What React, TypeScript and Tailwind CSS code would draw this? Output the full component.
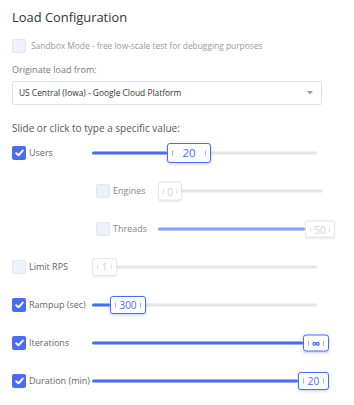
import React from "react";

const BLUE = "#4a6cf5";

function Check({ checked }: { checked: boolean }) {
  if (checked) {
    return (
      <div className="w-[14px] h-[14px] rounded-[2px] bg-[#4a6cf5] flex items-center justify-center shrink-0">
        <svg width="9" height="8" viewBox="0 0 9 8">
          <path d="M1.2 4.2 L3.5 6.3 L7.8 1.6" stroke="white" strokeWidth="2" fill="none" strokeLinecap="round" strokeLinejoin="round" />
        </svg>
      </div>
    );
  }
  return <div className="w-[14px] h-[14px] rounded-[2px] bg-[#edf2fa] border border-[#e1e7f0] shrink-0" />;
}

function Handle({ text, active, w, h, big }: { text: React.ReactNode; active: boolean; w: number; h: number; big?: boolean }) {
  return (
    <div
      className={
        "absolute top-1/2 -translate-y-1/2 bg-white rounded-[3px] flex items-center justify-center " +
        (active
          ? "border border-[#4a6cf5] text-[#4a6cf5] shadow-[0_1px_3px_rgba(74,108,245,0.35)]"
          : "border border-[#e6e6e6] text-[#cfcfcf] shadow-[0_1px_2px_rgba(0,0,0,0.08)]")
      }
      style={{ width: w, height: h }}
    >
      <span className={"absolute left-[4px] top-1/2 -translate-y-1/2 w-px h-[5px] " + (active ? "bg-[#9fb2f8]" : "bg-[#e2e2e2]")} />
      <span className={(big ? "text-[11.5px]" : "text-[10px]") + " leading-none"}>{text}</span>
      <span className={"absolute right-[4px] top-1/2 -translate-y-1/2 w-px h-[5px] " + (active ? "bg-[#9fb2f8]" : "bg-[#e2e2e2]")} />
    </div>
  );
}

function Slider({
  width,
  pos,
  hw,
  hh,
  text,
  active,
  fill,
  big,
}: {
  width: number;
  pos: number;
  hw: number;
  hh: number;
  text: React.ReactNode;
  active: boolean;
  fill?: string;
  big?: boolean;
}) {
  return (
    <div className="relative h-full" style={{ width }}>
      <div className="absolute left-0 right-0 top-1/2 -translate-y-1/2 h-[3px] bg-[#e5e5e5] rounded-full" />
      {fill && (
        <div className="absolute left-0 top-1/2 -translate-y-1/2 h-[3px] rounded-full" style={{ width: pos, background: fill }} />
      )}
      <div className="absolute top-0 bottom-0" style={{ left: pos }}>
        <Handle text={text} active={active} w={hw} h={hh} big={big} />
      </div>
    </div>
  );
}

function MainRow({
  checked,
  label,
  children,
}: {
  checked: boolean;
  label: string;
  children: React.ReactNode;
}) {
  return (
    <div className="flex items-center h-[38px]">
      <div className="w-[80px] flex items-center gap-[3px]">
        <Check checked={checked} />
        <span className="text-[9px] text-[#666] whitespace-nowrap">{label}</span>
      </div>
      {children}
    </div>
  );
}

function SubRow({ label, children }: { label: string; children: React.ReactNode }) {
  return (
    <div className="flex items-center h-[38px] pl-[84px]">
      <div className="w-[62px] flex items-center gap-[3px]">
        <Check checked={false} />
        <span className="text-[9px] text-[#888] whitespace-nowrap">{label}</span>
      </div>
      {children}
    </div>
  );
}

export default function App() {
  return (
    <div className="w-[354px] h-[405px] bg-white pl-3 pt-[6px] font-['Open_Sans',sans-serif] overflow-hidden">
      <div className="text-[12.9px] text-[#333] leading-[22px] h-[24px]">Load Configuration</div>
      <div className="flex items-center gap-[5px] h-[26px] mt-[3px]">
        <Check checked={false} />
        <span className="text-[8.4px] text-[#999]">Sandbox Mode - free low-scale test for debugging purposes</span>
      </div>
      <div className="text-[9px] text-[#777] h-[16px] leading-[16px] mt-[3px]">Originate load from:</div>
      <div className="mt-[3px] w-[310px] h-[24px] border border-[#dde3ea] rounded-[2px] flex items-center justify-between pl-[6px] pr-[8px]">
        <span className="text-[8.4px] text-[#333]">US Central (Iowa) - Google Cloud Platform</span>
        <svg width="6" height="4" viewBox="0 0 6 4">
          <path d="M0 0 L6 0 L3 3.5 Z" fill="#999" />
        </svg>
      </div>
      <div className="text-[10px] text-[#555] h-[18px] leading-[18px] mt-[14px]">Slide or click to type a specific value:</div>
      <div className="-mt-[3px]">
        <MainRow checked label="Users">
          <Slider width={225} pos={75} hw={44} hh={20} text="20" big active fill={BLUE} />
        </MainRow>
        <SubRow label="Engines">
          <Slider width={165} pos={0} hw={24} hh={19} text="0" active={false} />
        </SubRow>
        <SubRow label="Threads">
          <Slider width={177} pos={147} hw={30} hh={17} text="50" active={false} fill="#86a0f6" />
        </SubRow>
        <MainRow checked={false} label="Limit RPS">
          <Slider width={225} pos={0} hw={25} hh={18} text="1" active={false} />
        </MainRow>
        <MainRow checked label="Rampup (sec)">
          <Slider width={225} pos={18} hw={36} hh={18} text="300" active fill={BLUE} />
        </MainRow>
        <MainRow checked label="Iterations">
          <Slider width={225} pos={211} hw={26} hh={17} text={<span className="text-[12px] font-bold">∞</span>} active fill={BLUE} />
        </MainRow>
        <MainRow checked label="Duration (min)">
          <Slider width={225} pos={206} hw={31} hh={18} text="20" active fill={BLUE} />
        </MainRow>
      </div>
    </div>
  );
}
